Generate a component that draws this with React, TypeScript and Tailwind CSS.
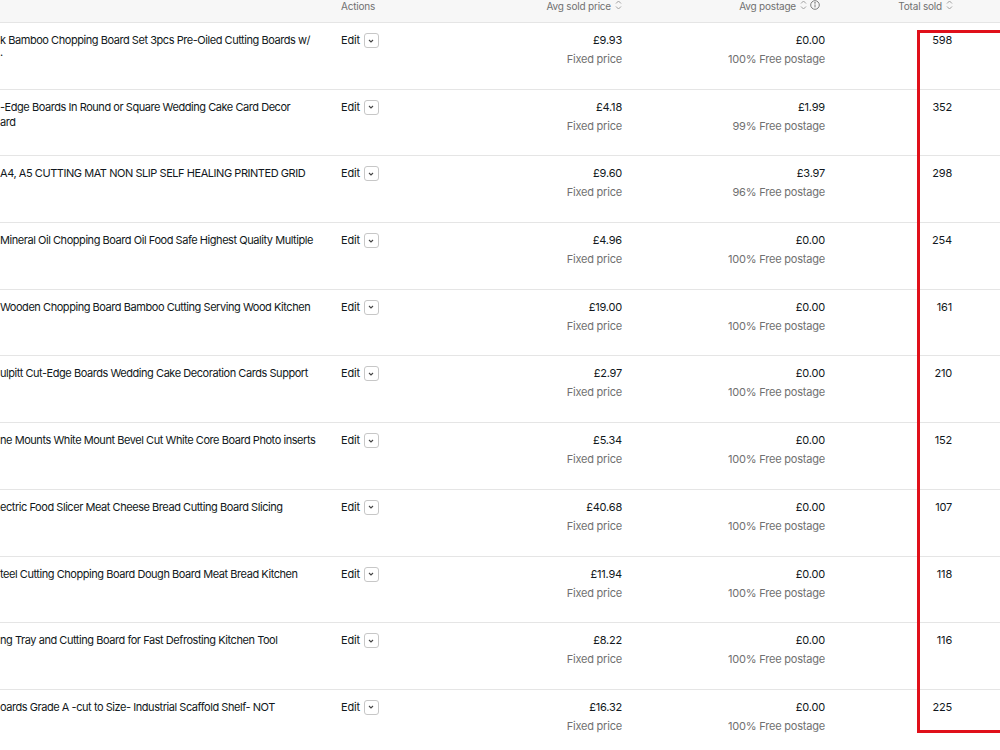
import React from 'react';

type Row = {
  title: string[];
  price: string;
  postage: string;
  free: string;
  sold: string;
};

const rows: Row[] = [
  { title: ['k Bamboo Chopping Board Set 3pcs Pre-Oiled Cutting Boards w/', '·'], price: '£9.93', postage: '£0.00', free: '100% Free postage', sold: '598' },
  { title: ['-Edge Boards In Round or Square Wedding Cake Card Decor', 'ard'], price: '£4.18', postage: '£1.99', free: '99% Free postage', sold: '352' },
  { title: ['A4, A5 CUTTING MAT NON SLIP SELF HEALING PRINTED GRID'], price: '£9.60', postage: '£3.97', free: '96% Free postage', sold: '298' },
  { title: ['Mineral Oil Chopping Board Oil Food Safe Highest Quality Multiple'], price: '£4.96', postage: '£0.00', free: '100% Free postage', sold: '254' },
  { title: [' Wooden Chopping Board Bamboo Cutting Serving Wood Kitchen'], price: '£19.00', postage: '£0.00', free: '100% Free postage', sold: '161' },
  { title: ['ulpitt Cut-Edge Boards Wedding Cake Decoration Cards Support'], price: '£2.97', postage: '£0.00', free: '100% Free postage', sold: '210' },
  { title: ['ne Mounts White Mount Bevel Cut White Core Board Photo inserts'], price: '£5.34', postage: '£0.00', free: '100% Free postage', sold: '152' },
  { title: ['ectric Food Slicer Meat Cheese Bread Cutting Board Slicing'], price: '£40.68', postage: '£0.00', free: '100% Free postage', sold: '107' },
  { title: ['teel Cutting Chopping Board Dough Board Meat Bread Kitchen'], price: '£11.94', postage: '£0.00', free: '100% Free postage', sold: '118' },
  { title: ['ng Tray and Cutting Board for Fast Defrosting Kitchen Tool'], price: '£8.22', postage: '£0.00', free: '100% Free postage', sold: '116' },
  { title: ['oards Grade A -cut to Size- Industrial Scaffold Shelf- NOT'], price: '£16.32', postage: '£0.00', free: '100% Free postage', sold: '225' },
];

function SortIcon() {
  return (
    <svg width="7" height="10" viewBox="0 0 7 10" className="ml-[4px] inline-block" fill="none" stroke="#a0a0a0" strokeWidth="1">
      <path d="M1 3.5 L3.5 1 L6 3.5" />
      <path d="M1 6.5 L3.5 9 L6 6.5" />
    </svg>
  );
}

function InfoIcon() {
  return (
    <svg width="10" height="10" viewBox="0 0 10 10" className="ml-[3px] inline-block" fill="none" stroke="#707070" strokeWidth="0.9">
      <circle cx="5" cy="5" r="4.3" />
      <path d="M5 4.4 V7.4" />
      <circle cx="5" cy="2.9" r="0.35" fill="#707070" />
    </svg>
  );
}

function ChevronDown() {
  return (
    <svg width="8" height="6" viewBox="0 0 8 6" fill="none" stroke="#444" strokeWidth="1.1">
      <path d="M2 2 L4 4 L6 2" />
    </svg>
  );
}

export default function App() {
  return (
    <div
      className="relative h-[750px] w-[1000px] overflow-hidden bg-white text-[11px] tracking-[-0.2px] text-[#111820]"
      style={{ fontFamily: 'Inter, "Liberation Sans", sans-serif' }}
    >
      {/* Header */}
      <div className="flex h-[23px] border-b border-[#e5e5e5] bg-[#f7f7f7] text-[10px] leading-[13px] text-[#707070]">
        <div className="w-[330px]" />
        <div className="w-[141px] pl-[11px]">Actions</div>
        <div className="flex w-[151px] items-start justify-end">
          <span>Avg sold price</span>
          <SortIcon />
        </div>
        <div className="flex w-[198px] items-start justify-end">
          <span>Avg postage</span>
          <SortIcon />
          <InfoIcon />
        </div>
        <div className="flex w-[133px] items-start justify-end">
          <span>Total sold</span>
          <SortIcon />
        </div>
      </div>

      {/* Rows */}
      {rows.map((r, idx) => (
        <div key={idx} className="flex h-[66.7px] border-b border-[#e5e5e5]">
          <div className="w-[330px] overflow-hidden whitespace-nowrap pt-[10px] leading-[15px] tracking-[-0.45px]">
            {r.title.map((t, i) => (
              <div key={i}>{t}</div>
            ))}
          </div>
          <div className="flex w-[141px] items-start pl-[11px] pt-[9px]">
            <span className="leading-[17px]">Edit</span>
            <button className="ml-[4px] mt-[1px] flex h-[15px] w-[15px] items-center justify-center rounded-[3px] border border-[#c7c7c7] bg-white">
              <ChevronDown />
            </button>
          </div>
          <div className="w-[151px] pt-[8px] text-right leading-[19px]">
            <div>{r.price}</div>
            <div className="text-[#707070]">Fixed price</div>
          </div>
          <div className="w-[203px] pt-[8px] text-right leading-[19px]">
            <div>{r.postage}</div>
            <div className="text-[#707070]">{r.free}</div>
          </div>
          <div className="w-[127px] pt-[8px] text-right leading-[19px]">{r.sold}</div>
        </div>
      ))}

      {/* highlight box */}
      <div className="absolute left-[917px] top-[30px] h-[703px] w-[90px] border-[3px] border-[#e0101a]" />
    </div>
  );
}
